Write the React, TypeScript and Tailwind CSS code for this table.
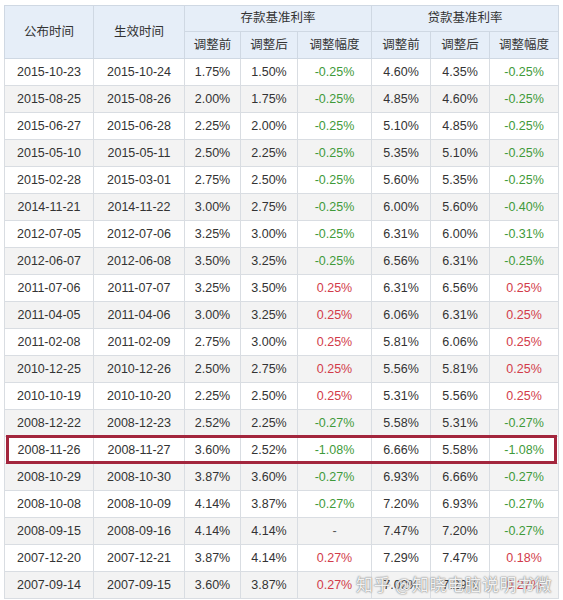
import React from "react";

type Row = [string, string, string, string, string, string, string, string];

const rows: Row[] = [
  ["2015-10-23", "2015-10-24", "1.75%", "1.50%", "-0.25%", "4.60%", "4.35%", "-0.25%"],
  ["2015-08-25", "2015-08-26", "2.00%", "1.75%", "-0.25%", "4.85%", "4.60%", "-0.25%"],
  ["2015-06-27", "2015-06-28", "2.25%", "2.00%", "-0.25%", "5.10%", "4.85%", "-0.25%"],
  ["2015-05-10", "2015-05-11", "2.50%", "2.25%", "-0.25%", "5.35%", "5.10%", "-0.25%"],
  ["2015-02-28", "2015-03-01", "2.75%", "2.50%", "-0.25%", "5.60%", "5.35%", "-0.25%"],
  ["2014-11-21", "2014-11-22", "3.00%", "2.75%", "-0.25%", "6.00%", "5.60%", "-0.40%"],
  ["2012-07-05", "2012-07-06", "3.25%", "3.00%", "-0.25%", "6.31%", "6.00%", "-0.31%"],
  ["2012-06-07", "2012-06-08", "3.50%", "3.25%", "-0.25%", "6.56%", "6.31%", "-0.25%"],
  ["2011-07-06", "2011-07-07", "3.25%", "3.50%", "0.25%", "6.31%", "6.56%", "0.25%"],
  ["2011-04-05", "2011-04-06", "3.00%", "3.25%", "0.25%", "6.06%", "6.31%", "0.25%"],
  ["2011-02-08", "2011-02-09", "2.75%", "3.00%", "0.25%", "5.81%", "6.06%", "0.25%"],
  ["2010-12-25", "2010-12-26", "2.50%", "2.75%", "0.25%", "5.56%", "5.81%", "0.25%"],
  ["2010-10-19", "2010-10-20", "2.25%", "2.50%", "0.25%", "5.31%", "5.56%", "0.25%"],
  ["2008-12-22", "2008-12-23", "2.52%", "2.25%", "-0.27%", "5.58%", "5.31%", "-0.27%"],
  ["2008-11-26", "2008-11-27", "3.60%", "2.52%", "-1.08%", "6.66%", "5.58%", "-1.08%"],
  ["2008-10-29", "2008-10-30", "3.87%", "3.60%", "-0.27%", "6.93%", "6.66%", "-0.27%"],
  ["2008-10-08", "2008-10-09", "4.14%", "3.87%", "-0.27%", "7.20%", "6.93%", "-0.27%"],
  ["2008-09-15", "2008-09-16", "4.14%", "4.14%", "-", "7.47%", "7.20%", "-0.27%"],
  ["2007-12-20", "2007-12-21", "3.87%", "4.14%", "0.27%", "7.29%", "7.47%", "0.18%"],
  ["2007-09-14", "2007-09-15", "3.60%", "3.87%", "0.27%", "7.02%", "7.29%", "0.27%"],
];

function changeColor(v: string) {
  if (v === "-") return "text-[#555555]";
  if (v.startsWith("-")) return "text-[#3f9a3a]";
  return "text-[#d23c4a]";
}

export default function App() {
  const th =
    "border border-[#cfd8e3] bg-[#e6eef8] text-[#333333] font-normal text-center text-[12.5px] p-0";
  const td = "border border-[#d9dde2] text-center text-[12.5px] p-0 h-[27px]";
  return (
    <div
      className="relative w-[563px] h-[600px] overflow-hidden bg-white"
      style={{ fontFamily: '"Liberation Sans", Arial, "Noto Sans CJK SC", sans-serif' }}
    >
      <div className="pl-[4px] pt-[5px]">
        <table className="border-collapse table-fixed w-[554px] text-[#333333]">
          <colgroup>
            <col className="w-[89px]" />
            <col className="w-[91px]" />
            <col className="w-[56px]" />
            <col className="w-[57px]" />
            <col className="w-[74px]" />
            <col className="w-[59px]" />
            <col className="w-[59px]" />
            <col className="w-[69px]" />
          </colgroup>
          <thead>
            <tr className="h-[26px]">
              <th rowSpan={2} className={th}>公布时间</th>
              <th rowSpan={2} className={th}>生效时间</th>
              <th colSpan={3} className={th}>存款基准利率</th>
              <th colSpan={3} className={th}>贷款基准利率</th>
            </tr>
            <tr className="h-[27px]">
              <th className={th}>调整前</th>
              <th className={th}>调整后</th>
              <th className={th}>调整幅度</th>
              <th className={th}>调整前</th>
              <th className={th}>调整后</th>
              <th className={th}>调整幅度</th>
            </tr>
          </thead>
          <tbody>
            {rows.map((r, i) => (
              <tr key={i} className={i % 2 === 1 ? "bg-[#f3f3f3]" : "bg-white"}>
                <td className={td}>{r[0]}</td>
                <td className={td}>{r[1]}</td>
                <td className={td}>{r[2]}</td>
                <td className={td}>{r[3]}</td>
                <td className={`${td} ${changeColor(r[4])}`}>{r[4]}</td>
                <td className={td}>{r[5]}</td>
                <td className={td}>{r[6]}</td>
                <td className={`${td} ${changeColor(r[7])}`}>{r[7]}</td>
              </tr>
            ))}
          </tbody>
        </table>
      </div>
      <div className="absolute left-[6px] top-[435px] w-[551px] h-[29px] border-[3px] border-[#a3263d]" />
      <div
        className="absolute left-[356px] top-[571px] text-[17px] text-white/90 tracking-[0.5px]"
        style={{
          textShadow: "0 0 1px #777, 0 0 2px #888",
          fontFamily: '"Noto Sans CJK SC", sans-serif',
        }}
      >
        知乎 @知晓电脑说明书微视频
      </div>
    </div>
  );
}
